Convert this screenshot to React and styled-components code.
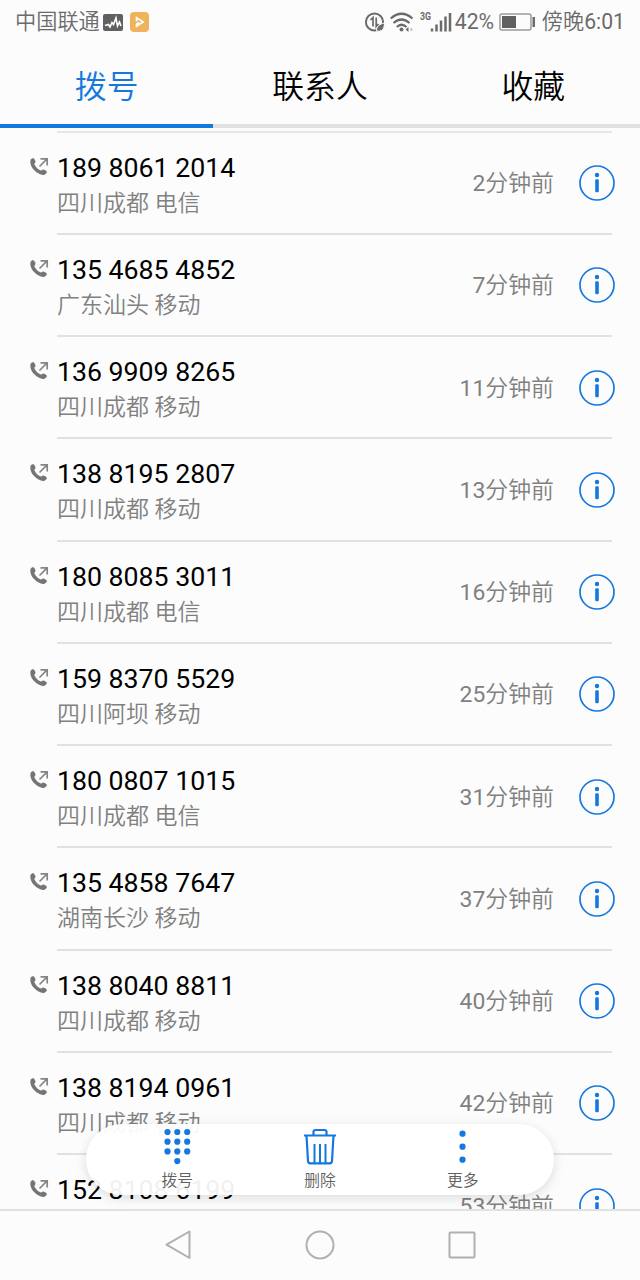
import React, { useState } from 'react';
import styled, { createGlobalStyle } from 'styled-components';

const GlobalStyle = createGlobalStyle`
  * { box-sizing: border-box; }
  body { margin: 0; background: #fcfcfc; }
`;

const Screen = styled.div`
  position: relative; width: 640px; height: 1280px; overflow: hidden;
  display: flex; flex-direction: column; background: #fcfcfc;
  font-family: Roboto, "Noto Sans CJK SC", sans-serif;
`;

const StatusBar = styled.header`
  flex: none; height: 44px; padding: 0 15px;
  display: flex; align-items: center; justify-content: space-between;
  color: #6b6b6b; font-size: 21.2px; line-height: 44px; white-space: nowrap;
`;
const StatusGroup = styled.div`display: flex; align-items: center;`;
const StatusIcon = styled.svg`flex: none; display: block; margin-left: ${({ $gap }) => $gap || 0}px;`;
const Label = styled.span`font-weight: 350;`;
const Digits = styled.span`font-weight: 400;`;
const Battery = styled(Digits)`margin-left: 3px; width: 40px;`;
const Clock = styled(Label)`margin-left: 6px;`;

const Tabs = styled.nav`flex: none; display: flex; height: 84px;`;
const Tab = styled.button`
  flex: 1; padding: 6px 0 0; border: 0; background: none; cursor: pointer;
  border-bottom: 4px solid ${({ $active }) => ($active ? '#1478df' : '#e1e1e1')};
  color: ${({ $active }) => ($active ? '#1478df' : '#000')};
  font: 350 31.8px/74px Roboto, "Noto Sans CJK SC", sans-serif;
`;

const CallList = styled.main`flex: 1; min-height: 0; overflow: hidden; padding-top: 2.5px;`;
const CallRow = styled.article`
  display: flex; height: 102.25px; padding: 0 25px 0 29px;
`;
const TypeIcon = styled.svg`flex: none; display: block; margin: 26px 7px 0 0;`;
const RowBody = styled.div`
  position: relative; flex: 1; display: flex; align-items: center;
  justify-content: space-between; padding-top: 3px;
  &::after {
    content: ''; position: absolute; left: 0; right: 3px; bottom: -2px;
    height: 2px; background: #e1e1e1;
  }
`;
const TopLine = styled.div`height: 2px; margin: 0 28px -2px 57px; background: #e6e6e6;`;
const Caller = styled.div`display: flex; flex-direction: column; padding-top: 6px;`;
const PhoneNumber = styled.div`
  color: #000; font-size: 26.7px; line-height: 34px; white-space: nowrap;
`;
const Region = styled.div`
  color: #808080; font-size: 23px; font-weight: 350; line-height: 37px; white-space: nowrap;
`;
const RowEnd = styled.div`display: flex; align-items: center; gap: 25px;`;
const Time = styled.span`color: #808080; font-size: 22.9px; font-weight: 350; line-height: 34px; padding-top: 2px;`;
const InfoIcon = styled.svg`display: block;`;

const ActionBar = styled.div`
  position: absolute; left: 86px; top: 1124px; width: 468px; height: 71px;
  padding: 0 20px; border-radius: 36px; background: rgba(255, 255, 255, 0.94);
  box-shadow: 0 3px 12px rgba(0, 0, 0, 0.13);
  display: flex;
`;
const Action = styled.button`
  flex: 1; padding: 4px 0 0; border: 0; background: none; cursor: pointer;
  display: flex; flex-direction: column; align-items: center;
  color: #606060; font: 350 15.8px/20px Roboto, "Noto Sans CJK SC", sans-serif;
  svg { display: block; margin-bottom: 6px; }
`;

const NavBar = styled.footer`
  flex: none; height: 71px; border-top: 2px solid #e1e1e1; padding: 0 107px 1px;
  display: flex; align-items: center; background: #fcfcfc;
`;
const NavKey = styled.button`
  flex: 1; height: 66px; padding: 0; border: 0; background: none; cursor: pointer;
  display: flex; align-items: center; justify-content: center;
`;

const calls = [
  { number: '189 8061 2014', region: '四川成都 电信', minutes: 2 },
  { number: '135 4685 4852', region: '广东汕头 移动', minutes: 7 },
  { number: '136 9909 8265', region: '四川成都 移动', minutes: 11 },
  { number: '138 8195 2807', region: '四川成都 移动', minutes: 13 },
  { number: '180 8085 3011', region: '四川成都 电信', minutes: 16 },
  { number: '159 8370 5529', region: '四川阿坝 移动', minutes: 25 },
  { number: '180 0807 1015', region: '四川成都 电信', minutes: 31 },
  { number: '135 4858 7647', region: '湖南长沙 移动', minutes: 37 },
  { number: '138 8040 8811', region: '四川成都 移动', minutes: 40 },
  { number: '138 8194 0961', region: '四川成都 移动', minutes: 42 },
  // scrolled half out of the list, its region line is below the fold
  { number: '152 8108 6199', minutes: 53 },
];

const tabs = ['拨号', '联系人', '收藏'];

const Status = () => (
  <StatusBar>
    <StatusGroup>
      <Label>中国联通</Label>
      <StatusIcon $gap={3} width="20" height="17" viewBox="0 0 20 17">
        <rect width="20" height="17" rx="2" fill="#606060" />
        <path d="M2 11.500l3.500-1 1.500 2.500 2-4.500 1.500 2L13 4l1.500 8 2-4 1.500 4" fill="none" stroke="#fff" strokeWidth="1.600" />
      </StatusIcon>
      <StatusIcon $gap={7} width="19" height="20" viewBox="0 0 19 20">
        <rect width="19" height="20" rx="4" fill="#efb35c" />
        <path d="M6.500 9.500V5.800L13.200 10l-6.700 4.200v-2l2.700-1.700" fill="none" stroke="#fff" strokeWidth="1.600" />
      </StatusIcon>
    </StatusGroup>
    <StatusGroup>
      {/* data saver */}
      <StatusIcon width="21" height="21" viewBox="0 0 21 21">
        <circle cx="10.500" cy="10" r="8.6" fill="none" stroke="#6b6b6b" strokeWidth="2" />
        <path d="M9 14.500V5.500L6.500 8M12.200 5.500v9L14.500 12" fill="none" stroke="#6b6b6b" strokeWidth="1.700" />
        <path d="M20.500 11c0 6-2.500 9-8 8 0-5 3-7 8-8z" fill="#6b6b6b" stroke="#fcfcfc" strokeWidth="1" />
      </StatusIcon>
      {/* wifi */}
      <StatusIcon $gap={5} width="25" height="20" viewBox="0 0 25 20">
        <g fill="none" stroke="#6b6b6b" strokeWidth="2.200">
          <path d="M.800 6.500Q11.500 -3 22.500 6.500" />
          <path d="M3.500 11Q11.500 4 19.500 11" />
          <path d="M6.800 15Q11.500 10.500 16.500 15" />
        </g>
        <circle cx="11.500" cy="17.500" r="2" fill="#6b6b6b" />
        <path d="M15.500 17.500l3-2.500v5z" fill="#6b6b6b" />
        <path d="M23 17.500l-2.500-2v4z" fill="#b8b8b8" />
      </StatusIcon>
      {/* mobile signal */}
      <StatusIcon $gap={5} width="32" height="22" viewBox="0 0 32 22">
        <text x="0" y="9" fontSize="10" fontWeight="700" fontFamily="Roboto" textLength="11" lengthAdjust="spacingAndGlyphs" fill="#6b6b6b">3G</text>
        <path d="M12 20.500v-3M16.500 20.500v-7M21 20.500v-11M25.500 20.500v-15M30 20.500V2" stroke="#6b6b6b" strokeWidth="2.500" />
      </StatusIcon>
      <Battery>42%</Battery>
      <StatusIcon $gap={4} width="37" height="18" viewBox="0 0 37 18">
        <rect x="1" y="1" width="31" height="16" rx="2" fill="none" stroke="#9a9a9a" strokeWidth="1.500" />
        <rect x="3" y="3" width="14" height="12" fill="#606060" />
        <rect x="33.500" y="4" width="2.500" height="10" fill="#6b6b6b" />
      </StatusIcon>
      <Clock>傍晚<Digits>6:01</Digits></Clock>
    </StatusGroup>
  </StatusBar>
);

const Call = ({ number, region, minutes }) => (
  <CallRow>
    <TypeIcon width="21" height="20" viewBox="0 0 21 20">
      <path d="M1.600 2.700C2.300 1.500 3.500.8 4.500 1.300c1 .6 2.200 2.600 2 3.600-.1.800-1 1.200-1.200 1.900C5.900 9.500 9.100 12.600 11.900 13.500c.8.100 1.200-1 2.200-1.100 1.100 0 3.300 1.200 3.700 2.200.4 1.200-.9 2.500-2.300 3.100-3 .8-7.200-1.200-9.900-4.100C2.600 10.700.600 6.500 1.600 2.700z" fill="#757575" />
      <path d="M11.500 1.800h6.700v6.700M17.800 2.200l-7.300 7.300" fill="none" stroke="#858585" strokeWidth="1.700" />
    </TypeIcon>
    <RowBody>
      <Caller>
        <PhoneNumber>{number}</PhoneNumber>
        <Region>{region || '\u00a0'}</Region>
      </Caller>
      <RowEnd>
        <Time><Digits>{minutes}</Digits>分钟前</Time>
        <InfoIcon width="36" height="36" viewBox="0 0 36 36">
          <circle cx="18" cy="18" r="17" fill="none" stroke="#1478df" strokeWidth="1.700" />
          <circle cx="18" cy="10" r="2.200" fill="#1478df" />
          <rect x="16.200" y="14.300" width="3.600" height="13" rx="1.200" fill="#1478df" />
        </InfoIcon>
      </RowEnd>
    </RowBody>
  </CallRow>
);

const KeypadIcon = () => (
  <svg width="28" height="37" viewBox="0 0 28 37" fill="#1478df">
    {[4.500, 14.300, 24.200].map((x) => [4, 13.7, 23.4].map((y) => <circle key={`${x}-${y}`} cx={x} cy={y} r="3.1" />))}
    <circle cx="14.300" cy="33.100" r="3.1" />
  </svg>
);

const TrashIcon = () => (
  <svg width="34" height="37" viewBox="0 0 34 37" fill="none" stroke="#1478df" strokeWidth="2.200">
    <path d="M1 7.500h32M10.500 7V4a2 2 0 0 1 2-2h9a2 2 0 0 1 2 2v3" />
    <path d="M3.500 7.500l1.500 25.700a2.300 2.300 0 0 0 2.300 2.100h19.400a2.300 2.300 0 0 0 2.300-2.100L30.500 7.500" />
    <path d="M11.500 16v19M17 16v19M22.500 16v19" strokeWidth="2" />
  </svg>
);

const MoreIcon = () => (
  <svg width="12" height="37" viewBox="0 0 12 37" fill="#1478df">
    {[5.7, 18.7, 31.7].map((y) => <circle key={y} cx="5.500" cy={y} r="3.1" />)}
  </svg>
);

const App = () => {
  const [active, setActive] = useState('拨号');

  return (
    <Screen>
      <GlobalStyle />
      <Status />
      <Tabs>
        {tabs.map((tab) => (
          <Tab key={tab} $active={tab === active} onClick={() => setActive(tab)}>{tab}</Tab>
        ))}
      </Tabs>
      <CallList>
        <TopLine />
        {calls.map((call) => <Call key={call.number} {...call} />)}
      </CallList>
      <ActionBar>
        <Action><KeypadIcon />拨号</Action>
        <Action><TrashIcon />删除</Action>
        <Action><MoreIcon />更多</Action>
      </ActionBar>
      <NavBar>
        <NavKey aria-label="返回">
          <svg width="30" height="32" viewBox="0 0 30 32">
            <path d="M26.500 2.500v26.500L3.500 15.700z" fill="none" stroke="#b0b0b0" strokeWidth="2" strokeLinejoin="round" />
          </svg>
        </NavKey>
        <NavKey aria-label="主页">
          <svg width="30" height="30" viewBox="0 0 30 30">
            <circle cx="15" cy="15" r="13.500" fill="none" stroke="#b0b0b0" strokeWidth="2" />
          </svg>
        </NavKey>
        <NavKey aria-label="最近任务">
          <svg width="28" height="28" viewBox="0 0 28 28">
            <rect x="1.500" y="1.500" width="25" height="25" rx="1" fill="none" stroke="#b0b0b0" strokeWidth="2" />
          </svg>
        </NavKey>
      </NavBar>
    </Screen>
  );
};

export default App;
